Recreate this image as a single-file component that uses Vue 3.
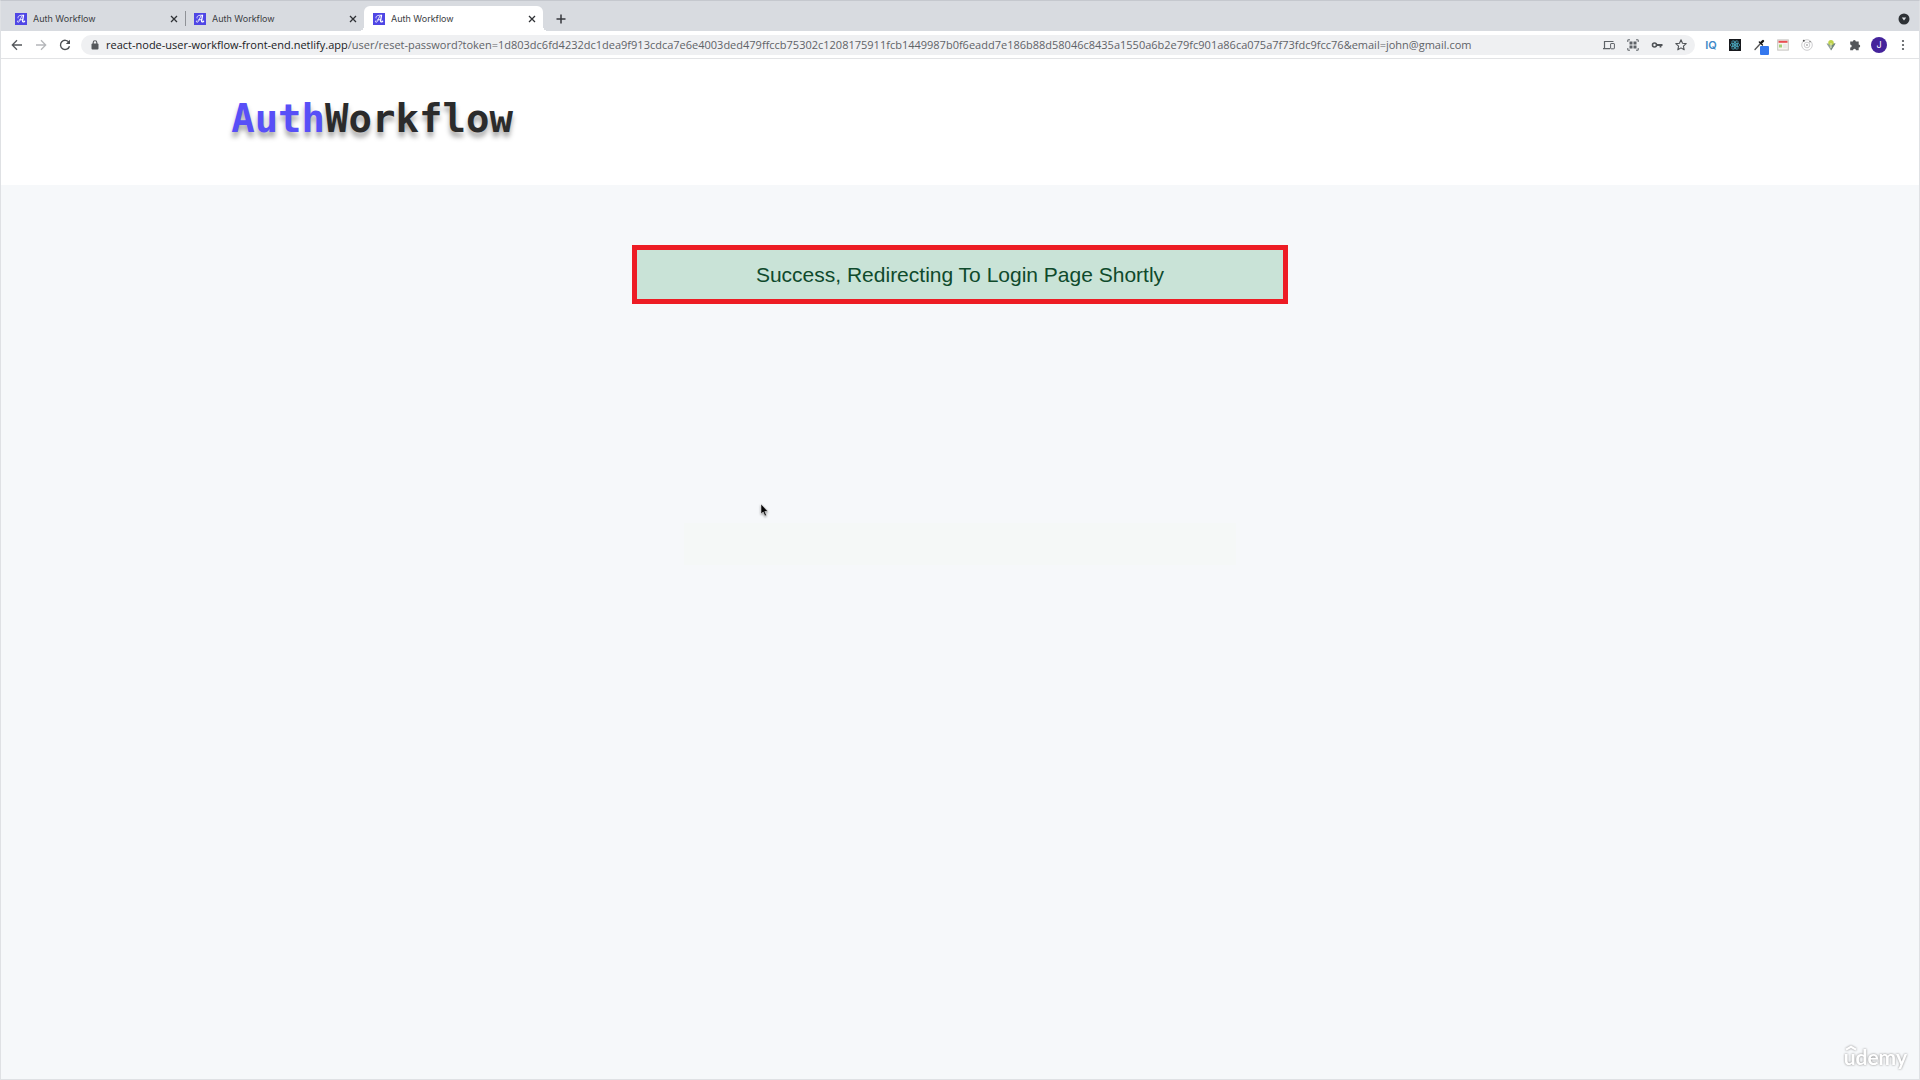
<script setup>
const tabs = [{ id: 1 }, { id: 2 }, { id: 3, active: true }]
const host = 'react-node-user-workflow-front-end.netlify.app'
const path =
  '/user/reset-password?token=1d803dc6fd4232dc1dea9f913cdca7e6e4003ded479ffccb75302c1208175911fcb1449987b0f6eadd7e186b88d58046c8435a1550a6b2e79fc901a86ca075a7f73fdc9fcc76&email=john@gmail.com'
</script>

<template>
  <div class="window">
    <div class="tab-strip">
      <div v-for="tab in tabs" :key="tab.id" class="tab" :class="{ active: tab.active }">
        <svg class="favicon" viewBox="0 0 24 24" aria-hidden="true">
          <rect width="24" height="24" fill="#4f46e5" />
          <g fill="none" stroke="#fff" stroke-linecap="round" stroke-linejoin="round">
            <path d="M6 10c-1-4 3-6 11-5.500" stroke-width="1.600" />
            <path d="M15 5C11 8 10 18 6.500 18.500c-2 0-2-2-1-3M9.500 13.500h6" stroke-width="1.800" />
            <path d="M17 5l-1.800 10.500c-.4 3 2 3 4 1" stroke-width="2.600" />
          </g>
        </svg>
        <span class="tab-title">Auth Workflow</span>
        <button class="icon-button close" type="button" aria-label="Close tab">
          <svg width="8" height="8" viewBox="0 0 8 8"><path d="M1 1l6 6M7 1L1 7" stroke="#303236" stroke-width="1.300" /></svg>
        </button>
      </div>
      <button class="icon-button new-tab" type="button" aria-label="New tab">
        <svg width="10" height="10" viewBox="0 0 10 10"><path d="M5 0.500v9M0.500 5h9" stroke="#36393d" stroke-width="1.500" /></svg>
      </button>
      <button class="icon-button tab-search" type="button" aria-label="Search tabs">
        <svg width="12" height="12" viewBox="0 0 12 12"><circle cx="6" cy="6" r="5.500" fill="#2e3236" /><path d="M3.800 4.500h4.400L6 7.600z" fill="#dee1e6" /></svg>
      </button>
    </div>

    <div class="toolbar">
      <div class="nav">
        <button class="icon-button" type="button" aria-label="Back">
          <svg width="12" height="12" viewBox="0 0 12 12"><path d="M11 6H1.500M6 1.300L1.300 6 6 10.700" fill="none" stroke="#55585c" stroke-width="1.300" /></svg>
        </button>
        <button class="icon-button" type="button" aria-label="Forward">
          <svg width="12" height="12" viewBox="0 0 12 12"><path d="M1 6h9.500M6 1.300L10.700 6 6 10.700" fill="none" stroke="#b5b7ba" stroke-width="1.300" /></svg>
        </button>
        <button class="icon-button" type="button" aria-label="Reload">
          <svg width="12" height="12" viewBox="0 0 12 12"><path d="M10 3.500A4.600 4.600 0 1 0 10.500 7.200" fill="none" stroke="#4c4f53" stroke-width="1.400" /><path d="M11 0.800v4.200H6.800z" fill="#4c4f53" /></svg>
        </button>
      </div>
      <div class="address">
        <svg class="lock" width="8" height="10" viewBox="0 0 8 10" aria-hidden="true"><rect x="0.500" y="3.500" width="7" height="6" rx="1" fill="#55585c" /><path d="M2.200 4V2.600a1.800 1.800 0 0 1 3.600 0V4" fill="none" stroke="#55585c" stroke-width="1.100" /></svg>
        <a class="url" href="#"><span class="host">{{ host }}</span>{{ path }}</a>
        <div class="address-icons">
          <button class="icon-button" type="button" aria-label="Send to device">
            <svg width="12" height="12" viewBox="0 0 12 12"><path d="M10.500 2.500h-9v6.500M0 9.700h7" fill="none" stroke="#5f6368" stroke-width="1.200" /><rect x="7.600" y="4.500" width="3.800" height="5.300" rx=".5" fill="none" stroke="#5f6368" /></svg>
          </button>
          <button class="icon-button" type="button" aria-label="QR code">
            <svg width="12" height="12" viewBox="0 0 12 12"><path d="M.8 3V.8H3M9 .8h2.200V3M11.200 9v2.200H9M3 11.200H.8V9" fill="none" stroke="#5f6368" /><path d="M2.500 2.500h3v3h-3zM6.500 2.500h3v3h-3zM2.500 6.500h3v3h-3zM6.500 6.500h3v3h-3z" fill="#5f6368" /></svg>
          </button>
          <button class="icon-button" type="button" aria-label="Passwords">
            <svg width="12" height="12" viewBox="0 0 12 12"><circle cx="3.500" cy="6" r="2" fill="none" stroke="#505357" stroke-width="1.600" /><path d="M5.800 6h5.700M9.500 6v2.600" fill="none" stroke="#505357" stroke-width="1.800" /></svg>
          </button>
          <button class="icon-button" type="button" aria-label="Bookmark">
            <svg width="12" height="12" viewBox="0 0 12 12"><path d="M6 .8l1.500 3.400 3.700.4-2.800 2.500.8 3.700L6 8.900l-3.200 1.900.8-3.700L.8 4.600l3.700-.4z" fill="none" stroke="#505357" stroke-width="1.100" stroke-linejoin="round" /></svg>
          </button>
        </div>
      </div>
      <div class="extensions">
        <button class="icon-button iq" type="button">IQ</button>
        <button class="icon-button" type="button" aria-label="React developer tools">
          <svg width="12" height="12" viewBox="0 0 12 12"><rect width="12" height="12" fill="#17191d" /><g fill="none" stroke="#4fb6cf" stroke-width=".7"><ellipse cx="6" cy="6" rx="4.800" ry="1.900" /><ellipse cx="6" cy="6" rx="4.800" ry="1.900" transform="rotate(60 6 6)" /><ellipse cx="6" cy="6" rx="4.800" ry="1.900" transform="rotate(120 6 6)" /></g><circle cx="6" cy="6" r=".9" fill="#61dafb" /></svg>
        </button>
        <button class="icon-button" type="button" aria-label="Color picker">
          <svg class="picker" width="16" height="16" viewBox="0 0 16 16"><path d="M2 10.500l5.500-6" stroke="#555" stroke-width="1.300" stroke-linecap="round" /><path d="M8.300 3.700L10 2" stroke="#151515" stroke-width="2.400" stroke-linecap="round" /><path d="M6.300 3l3.200 3" stroke="#151515" stroke-width="1.300" stroke-linecap="round" /><rect x="7" y="7" width="9" height="9" rx="1" fill="#3478ee" /></svg>
        </button>
        <button class="icon-button" type="button" aria-label="Page layout">
          <svg width="12" height="12" viewBox="0 0 12 12"><rect x=".7" y=".9" width="10.600" height="10.200" fill="#f7f5ef" stroke="#c5c4c0" /><path d="M1.500 2.800h9" stroke="#e94d50" stroke-width="2" /><rect x="2" y="5.500" width="3" height="3" fill="#a4d078" /><path d="M6.200 6h3.500M6.200 8h3.500" stroke="#ddd" /></svg>
        </button>
        <button class="icon-button" type="button" aria-label="Orbit">
          <svg width="12" height="12" viewBox="0 0 12 12"><g fill="none" stroke="#c1c2c4" stroke-width=".8"><circle cx="6" cy="6" r="5.300" /><circle cx="6" cy="6" r="2.800" /></g><circle cx="2.800" cy="1.800" r="1" fill="#555" /><circle cx="9" cy="2.800" r=".8" fill="#777" /><circle cx="6" cy="6" r=".9" fill="#aaa" /></svg>
        </button>
        <button class="icon-button" type="button" aria-label="Diamond">
          <svg width="12" height="12" viewBox="0 0 12 12"><path d="M1.500 4.500h9L6 11.500z" fill="#94a39d" /><path d="M6 4.500h4.500L6 11.500z" fill="#72877e" /><circle cx="6" cy="3.600" r="2.700" fill="#bfd349" /><path d="M6 4v5" stroke="#e5efc1" /></svg>
        </button>
        <button class="icon-button" type="button" aria-label="Extensions">
          <svg width="12" height="12" viewBox="0 0 12 12"><path d="M1.200 2.500h2.600a1.500 1.500 0 1 1 3 0h2.900v3a1.500 1.500 0 1 1 0 3v2.800H7a1.500 1.500 0 0 0-3 0H1.200V8.500a1.500 1.500 0 0 0 0-3z" fill="#54575b" /></svg>
        </button>
        <button class="icon-button avatar" type="button">J</button>
        <button class="icon-button" type="button" aria-label="Menu">
          <svg width="12" height="12" viewBox="0 0 12 12"><g fill="#505357"><circle cx="6" cy="2" r="1.100" /><circle cx="6" cy="6" r="1.100" /><circle cx="6" cy="10" r="1.100" /></g></svg>
        </button>
      </div>
    </div>

    <header class="site-header">
      <div class="header-inner">
        <a class="logo" href="#"><span>Auth</span>Workflow</a>
      </div>
    </header>

    <main class="content">
      <div class="alert" role="status">Success, Redirecting To Login Page Shortly</div>
      <div class="fading-field"></div>
      <svg class="cursor" width="10" height="16" viewBox="0 0 10 16" aria-hidden="true"><path d="M1 1v10l2.200-2 1.700 4 1.600-.7-1.700-3.800H8z" fill="#050505" stroke="#fff" stroke-width=".5" /></svg>
      <div class="watermark"><svg width="12" height="6" viewBox="0 0 12 6" aria-hidden="true"><path d="M1 4.600L6 1.700l5 2.900" fill="none" stroke="#fff" stroke-width="2.200" /></svg>udemy</div>
    </main>
  </div>
</template>

<style>
body {
  margin: 0;
  background: #f6f8fa;
}
</style>

<style scoped>
.window {
  box-sizing: border-box;
  min-height: 100vh;
  display: flex;
  flex-direction: column;
  border: 1px solid #dfe1e4;
  border-top-color: #c5c8ce;
  font-family: Inter, "Liberation Sans", sans-serif;
}

a {
  color: inherit;
  text-decoration: none;
}

.icon-button {
  display: flex;
  align-items: center;
  justify-content: center;
  flex: none;
  width: 12px;
  height: 12px;
  padding: 0;
  border: 0;
  background: none;
  font-family: inherit;
}

.icon-button svg {
  flex: none;
  overflow: visible;
}

.tab-strip {
  display: flex;
  align-items: flex-end;
  height: 30px;
  padding: 0 9px 0 5px;
  background: #d8dbe0;
}

.tab {
  position: relative;
  box-sizing: border-box;
  display: flex;
  align-items: center;
  width: 179px;
  height: 25px;
  padding: 0 5px 0 9px;
}

.tab:first-child::after {
  content: "";
  position: absolute;
  top: 5px;
  right: -1px;
  width: 1px;
  height: 15px;
  background: #8f9297;
}

.tab.active {
  border-radius: 6px 6px 0 0;
  background: #fff;
}

.tab.active::before,
.tab.active::after {
  content: "";
  position: absolute;
  bottom: 0;
  width: 5px;
  height: 5px;
}

.tab.active::before {
  right: 100%;
  background: radial-gradient(circle at 0 0, transparent 5px, #fff 5px);
}

.tab.active::after {
  left: 100%;
  background: radial-gradient(circle at 100% 0, transparent 5px, #fff 5px);
}

.favicon {
  width: 12px;
  height: 12px;
}

.tab-title {
  flex: 1;
  margin-left: 6px;
  color: #3c4043;
  font-size: 9px;
  line-height: 12px;
}

.new-tab {
  margin: 0 0 6px 12px;
}

.tab-search {
  margin: 0 0 6px auto;
}

.toolbar {
  display: flex;
  align-items: center;
  height: 27px;
  border-bottom: 1px solid #e2e3e5;
  background: #fff;
}

.nav {
  display: flex;
  gap: 12px;
  padding: 0 10px;
}

.address {
  display: flex;
  flex: 1;
  align-items: center;
  min-width: 0;
  height: 20px;
  padding: 0 8px 0 10px;
  border-radius: 10px;
  background: #eff0f2;
}

.lock {
  flex: none;
}

.url {
  flex: 1;
  min-width: 0;
  margin-left: 7px;
  overflow: hidden;
  color: #5f6368;
  font-family: "Open Sans", "Liberation Sans", sans-serif;
  font-size: 11px;
  line-height: 20px;
  white-space: nowrap;
}

.host {
  color: #202124;
}

.address-icons,
.extensions {
  display: flex;
  align-items: center;
  gap: 12px;
}

.extensions {
  padding: 0 10px;
}

.iq {
  color: #4189c7;
  font-size: 11px;
  font-weight: 600;
}

.picker {
  margin: 4px 0 0 4px;
}

.avatar {
  width: 16px;
  height: 16px;
  margin: 0 -2px;
  border-radius: 50%;
  background: #44239b;
  color: #fff;
  font-size: 9px;
}

.site-header {
  padding: 29px 0 35px;
  background: #fff;
}

.header-inner {
  width: 76%;
  margin: 0 auto;
}

.logo {
  display: block;
  color: #2b2b2b;
  font-family: "DejaVu Sans Mono", monospace;
  font-size: 39px;
  font-weight: 700;
  line-height: 62px;
  text-shadow: 0 5px 5px rgba(0, 0, 0, 0.35);
}

.logo span {
  color: #584ff7;
}

.content {
  position: relative;
  flex: 1;
  padding: 60px 24px;
  background: #f6f8fa;
}

.alert {
  box-sizing: border-box;
  max-width: 656px;
  margin: 0 auto;
  border: 5px solid #ed1c24;
  background: #c9e3d7;
  color: #0f4a2c;
  font-family: "Liberation Sans", sans-serif;
  font-size: 21px;
  line-height: 49px;
  text-align: center;
}

.fading-field {
  max-width: 552px;
  height: 42px;
  margin: 219px auto 0;
  background: #f5f8f7;
}

.cursor {
  position: absolute;
  top: 318px;
  left: 759px;
  filter: drop-shadow(0 1px 1px rgba(0, 0, 0, 0.4));
}

.watermark {
  position: absolute;
  right: 12px;
  bottom: 8px;
  color: #fff;
  font-family: Lato, sans-serif;
  font-size: 21px;
  font-weight: 700;
  line-height: 28px;
  filter: drop-shadow(0 0 1px #888);
}

.watermark svg {
  position: absolute;
  top: 2px;
  left: 1px;
}
</style>
